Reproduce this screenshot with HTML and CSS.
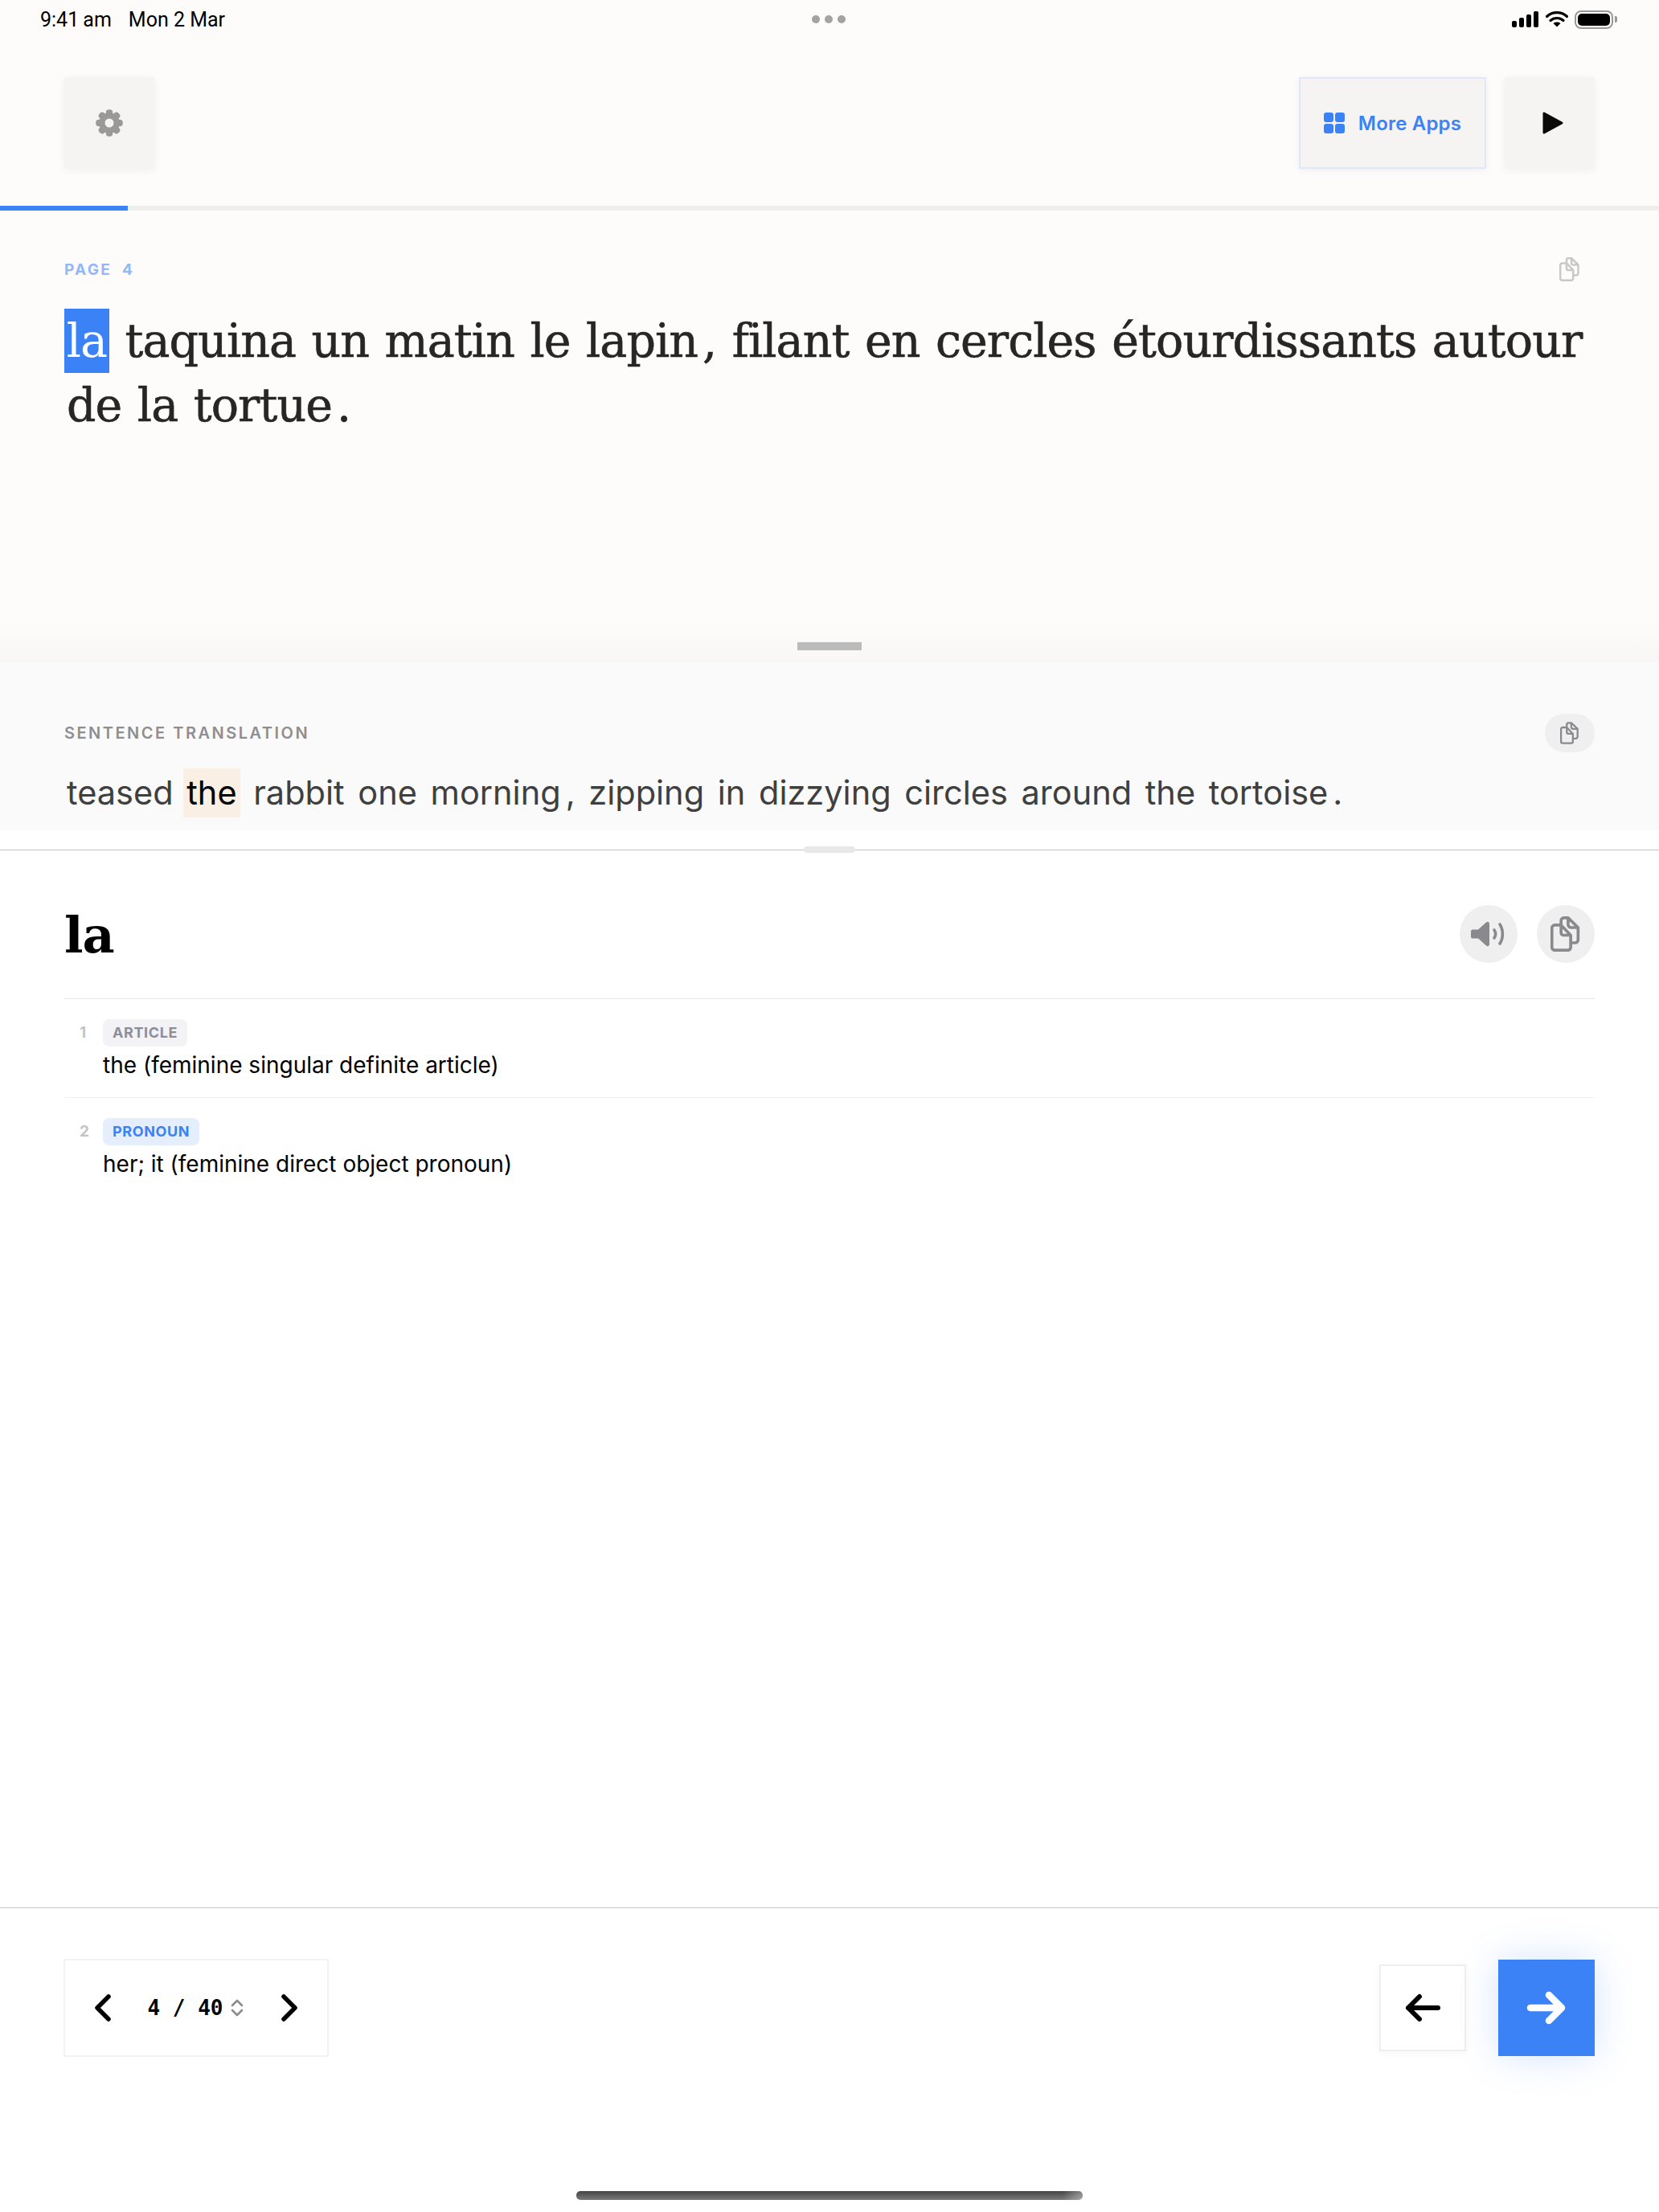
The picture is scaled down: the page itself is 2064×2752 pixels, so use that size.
FILE: index.html
```html
<!DOCTYPE html>
<html lang="en">
<head>
    <meta charset="UTF-8">
    <meta name="viewport" content="width=device-width, initial-scale=1.0">
    <title>Reader</title>
    <link rel="stylesheet" href="styles.css">
</head>
<body>
<div class="page">
    <div class="status">
        <div class="status-left"><span>9:41&#8201;am</span><span>Mon 2 Mar</span></div>
        <div class="status-dots"><i></i><i></i><i></i></div>
        <div class="status-right">
            <svg width="34" height="22" viewBox="0 0 34 22"><rect x="0" y="13" width="6" height="8" rx="2"/><rect x="9" y="9" width="6" height="12" rx="2"/><rect x="18" y="5" width="6" height="16" rx="2"/><rect x="27" y="1" width="6" height="20" rx="2"/></svg>
            <svg width="28" height="22" viewBox="0 0 28 22"><path d="M1.5 7.5C8.5 1 19.5 1 26.500 7.500" fill="none" stroke="#000" stroke-width="3.200" stroke-linecap="round"/><path d="M6 12.500C10.500 8.500 17.500 8.500 22 12.500" fill="none" stroke="#000" stroke-width="3.200" stroke-linecap="round"/><path d="M9.500 16L14 20.500 18.500 16C16 14 12 14 9.500 16Z"/></svg>
            <div class="battery"><div class="battery-fill"></div></div>
            <div class="battery-tip"></div>
        </div>
    </div>

    <div class="toolbar">
        <button class="tool tool-square">
            <svg width="36" height="36" viewBox="0 0 36 36">
                <g fill="#999" stroke="#999" stroke-width="1.500" stroke-linejoin="round">
                    <circle cx="18" cy="18" r="12"/>
                    <rect x="14.500" y="2" width="7" height="32" rx="3"/>
                    <rect x="14.500" y="2" width="7" height="32" rx="3" transform="rotate(45 18 18)"/>
                    <rect x="14.500" y="2" width="7" height="32" rx="3" transform="rotate(90 18 18)"/>
                    <rect x="14.500" y="2" width="7" height="32" rx="3" transform="rotate(135 18 18)"/>
                </g>
                <circle cx="18" cy="18" r="5.500" fill="#f5f4f3"/>
            </svg>
        </button>
        <div class="tool-right">
            <button class="tool tool-apps">
                <span class="apps-icon"><i></i><i></i><i></i><i></i></span>
                More Apps
            </button>
            <button class="tool tool-square">
                <svg class="play" width="28" height="30" viewBox="0 0 28 30"><path fill="#0a0a0a" stroke="#0a0a0a" stroke-width="3" stroke-linejoin="round" d="M3 3v24l22-12z"/></svg>
            </button>
        </div>
    </div>

    <div class="progress"><div class="progress-fill"></div></div>

    <section class="reader">
        <div class="label-row">
            <span class="page-label">PAGE <b>4</b></span>
            <svg class="copy-small" width="26" height="30" viewBox="0 0 26 30"><use href="#copy"/></svg>
        </div>
        <p class="french"><span class="word-on">la</span> taquina un matin le lapin<span class="punct">,</span> filant en cercles étourdissants autour de la tortue<span class="punct">.</span></p>
        <div class="reader-fade"><div class="handle"></div></div>
    </section>

    <section class="sentence">
        <div class="label-row sentence-head">
            <span class="sentence-label">SENTENCE TRANSLATION</span>
            <button class="pill"><svg width="24" height="28" viewBox="0 0 26 30"><use href="#copy"/></svg></button>
        </div>
        <p class="english">teased <span class="word-match">the</span> rabbit one morning<span class="punct">,</span> zipping in dizzying circles around the tortoise<span class="punct">.</span></p>
    </section>

    <div class="split"><div class="split-handle"></div></div>

    <section class="dict">
        <div class="dict-head">
            <h1>la</h1>
            <div class="dict-actions">
                <button class="round">
                    <svg width="44" height="34" viewBox="0 0 44 34"><path fill="#8a8a8e" d="M2 11.500h7L19 2.500c2-1.500 4-.5 4 2v25c0 2.500-2 3.500-4 2l-10-9H2c-1 0-2-1-2-2v-7c0-1 1-2 2-2z"/><path d="M29 12c2 3 2 7 0 10M36 5c4.500 7 4.500 17 0 24" fill="none" stroke="#8a8a8e" stroke-width="3.600" stroke-linecap="round"/></svg>
                </button>
                <button class="round">
                    <svg width="38" height="46" viewBox="0 0 26 30"><use href="#copy"/></svg>
                </button>
            </div>
        </div>
        <div class="sense">
            <span class="num">1</span>
            <div>
                <span class="tag">ARTICLE</span>
                <div class="def">the (feminine singular definite article)</div>
            </div>
        </div>
        <div class="sense">
            <span class="num">2</span>
            <div>
                <span class="tag tag-blue">PRONOUN</span>
                <div class="def">her; it (feminine direct object pronoun)</div>
            </div>
        </div>
    </section>

    <footer class="footer">
        <div class="pager">
            <svg width="24" height="36" viewBox="0 0 24 36"><path d="M18 4L4 18l14 14" class="chev"/></svg>
            <div class="pager-count">
                <span>4 / 40</span>
                <svg width="16" height="22" viewBox="0 0 16 22"><path d="M2 8l6-6 6 6M2 14l6 6 6-6" fill="none" stroke="#8c8c8c" stroke-width="2.600" stroke-linecap="round" stroke-linejoin="round"/></svg>
            </div>
            <svg width="24" height="36" viewBox="0 0 24 36"><path d="M6 4l14 14L6 32" class="chev"/></svg>
        </div>
        <div class="nav">
            <button class="nav-back">
                <svg width="44" height="36" viewBox="0 0 44 36"><path d="M41 18H4M18 4L4 18l14 14" fill="none" stroke="#000" stroke-width="6" stroke-linecap="round" stroke-linejoin="round"/></svg>
            </button>
            <button class="nav-next">
                <svg width="50" height="42" viewBox="0 0 50 42"><path d="M5 21h39M28 5l16 16-16 16" fill="none" stroke="#fff" stroke-width="8.500" stroke-linecap="round" stroke-linejoin="round"/></svg>
            </button>
        </div>
        <div class="home-bar"></div>
    </footer>

    <svg class="defs" width="0" height="0">
        <symbol id="copy" viewBox="0 0 26 30">
            <path fill="none" stroke="currentColor" stroke-width="2.500" stroke-linejoin="round" stroke-linecap="round" d="M3.700 7.400H9L17.200 16v10.300a2.500 2.500 0 0 1-2.500 2.500H3.700a2.500 2.500 0 0 1-2.500-2.500V9.900a2.500 2.500 0 0 1 2.500-2.500zM9 7.400V14a2 2 0 0 0 2 2h6.200M9 7.400V3.700a2.500 2.500 0 0 1 2.500-2.500H15l8.500 8.300v10.500a2.500 2.500 0 0 1-2.500 2.500h-3.800M15 1.200V7a2.500 2.500 0 0 0 2.500 2.500h6"/>
        </symbol>
    </svg>
</div>
</body>
</html>
```

FILE: styles.css
```css
* {
    box-sizing: border-box;
}
body {
    margin: 0;
    background: #fff;
    font-family: Inter, "Liberation Sans", sans-serif;
}
button {
    font-family: inherit;
    border: 0;
    padding: 0;
}
p, h1 {
    margin: 0;
}
.page {
    position: relative;
    width: 2064px;
    height: 2752px;
    display: flex;
    flex-direction: column;
    overflow: hidden;
}
.defs {
    position: absolute;
}

/* status bar */
.status {
    height: 48px;
    background: #fdfcfb;
    padding: 0 52px 0 50px;
    display: grid;
    grid-template-columns: 1fr auto 1fr;
    align-items: center;
}
.status-left {
    display: flex;
    gap: 21px;
    font-size: 25px;
    color: #000;
    font-family: Roboto, sans-serif;
}
.status-dots {
    display: flex;
    gap: 6px;
}
.status-dots i {
    width: 10px;
    height: 10px;
    border-radius: 50%;
    background: #a3a3a3;
}
.status-right {
    display: flex;
    justify-content: flex-end;
    align-items: center;
    gap: 8px;
}
.battery {
    width: 48px;
    height: 23px;
    border: 2px solid #999;
    border-radius: 8px;
    padding: 2px;
}
.battery-fill {
    height: 100%;
    background: #000;
    border-radius: 5px;
}
.battery-tip {
    width: 3px;
    height: 8px;
    background: #999;
    margin-left: -6px;
    border-radius: 0 2px 2px 0;
}

/* top toolbar */
.toolbar {
    height: 208px;
    background: #fdfcfb;
    padding: 48px 80px 0;
    display: flex;
    justify-content: space-between;
    align-items: flex-start;
}
.tool-right {
    display: flex;
    gap: 23px;
}
.tool {
    height: 114px;
    background: #f5f4f3;
    box-shadow: 0 2px 10px rgba(0, 0, 0, 0.05);
    display: flex;
    align-items: center;
    justify-content: center;
}
.tool-square {
    width: 112px;
}
.play {
    margin-left: 7px;
}
.tool-apps {
    width: 233px;
    gap: 17px;
    border: 2px solid #dfe8f8;
    color: #3b82f6;
    font-size: 24px;
    font-weight: 600;
    letter-spacing: 0.200px;
}
.apps-icon {
    display: grid;
    grid-template-columns: 12px 12px;
    gap: 2px;
}
.apps-icon i {
    height: 12px;
    background: #3b82f6;
    border-radius: 3px;
}

.progress {
    height: 6px;
    background: #eeeeec;
}
.progress-fill {
    width: 159px;
    height: 100%;
    background: #3b82f6;
}

/* french text */
.reader {
    height: 562px;
    background: #fdfcfb;
    display: flex;
    flex-direction: column;
}
.label-row {
    display: flex;
    justify-content: space-between;
    align-items: center;
    padding: 0 80px;
}
.reader .label-row {
    padding-top: 54px;
    padding-right: 98px;
    height: 92px;
}
.page-label {
    font-size: 19px;
    font-weight: 700;
    letter-spacing: 2.300px;
    color: #93b8f8;
}
.page-label b {
    font-weight: 700;
    margin-left: 6px;
}
.copy-small {
    color: #c8c8c8;
}
.french {
    margin-top: 30px;
    padding: 0 80px 0 83px;
    font-family: "DejaVu Serif", serif;
    font-size: 57px;
    line-height: 80px;
    letter-spacing: -0.900px;
    word-spacing: 2.200px;
    color: #262626;
    -webkit-text-stroke: 0.600px #262626;
}
.word-on {
    display: inline-block;
    width: 56px;
    margin-left: -3px;
    text-align: center;
    background: #3b82f6;
    color: #fff;
    -webkit-text-stroke: 0;
}
.punct {
    margin-left: 6px;
}
.reader-fade {
    margin-top: auto;
    height: 54px;
    background: linear-gradient(#fdfcfb, #f8f7f5);
    padding-top: 29px;
}
.handle {
    width: 80px;
    height: 10px;
    margin: 0 auto;
    background: #bbb;
}

/* translation */
.sentence {
    height: 209px;
    background: #fafafa;
}
.sentence-head {
    padding-top: 64px;
}
.sentence-label {
    font-size: 20px;
    font-weight: 600;
    letter-spacing: 2.500px;
    color: #8e8e93;
}
.pill {
    width: 62px;
    height: 48px;
    border-radius: 24px;
    background: #efefef;
    color: #8a8a8e;
    display: flex;
    align-items: center;
    justify-content: center;
}
.english {
    margin-top: 20px;
    padding: 0 80px 0 83px;
    font-size: 41.500px;
    line-height: 61px;
    color: #3f3f3f;
    word-spacing: 5px;
}
.word-match {
    display: inline-block;
    background: #f9efe4;
    color: #000;
    padding: 0 4px;
    margin-left: -4px;
}

.split {
    position: relative;
    height: 25px;
    border-bottom: 1px solid #c4c4c4;
}
.split-handle {
    position: absolute;
    left: 1000px;
    top: 20px;
    width: 64px;
    height: 8px;
    border-radius: 4px;
    background: #e8e8e8;
}

/* dictionary */
.dict {
    height: 1315px;
    padding: 0 80px;
}
.dict-head {
    height: 185px;
    padding-top: 68px;
    display: flex;
    justify-content: space-between;
    align-items: flex-start;
    border-bottom: 1px solid #e8e8e8;
}
.dict-head h1 {
    margin-top: 2px;
    font-family: "DejaVu Serif", serif;
    font-size: 62px;
    line-height: 72px;
    letter-spacing: -1px;
    color: #000;
}
.dict-actions {
    display: flex;
    gap: 24px;
}
.round {
    width: 72px;
    height: 72px;
    border-radius: 50%;
    background: #efefef;
    color: #8a8a8e;
    display: flex;
    align-items: center;
    justify-content: center;
}
.sense {
    height: 123px;
    padding: 25px 0 0 19px;
    display: flex;
    gap: 17px;
    border-bottom: 1px solid #f0f0f0;
}
.sense:last-child {
    border-bottom: 0;
}
.num {
    width: 12px;
    font-size: 19px;
    font-weight: 700;
    line-height: 34px;
    color: #c4c4c4;
}
.tag {
    display: inline-block;
    height: 34px;
    line-height: 34px;
    padding: 0 12px;
    border-radius: 8px;
    background: #f3f3f5;
    color: #8e8e9a;
    font-size: 18px;
    font-weight: 700;
    letter-spacing: 0.600px;
}
.tag-blue {
    background: #e5eefd;
    color: #3b82f6;
}
.def {
    margin-top: 3px;
    font-size: 28px;
    line-height: 40px;
    color: #000;
}

/* bottom bar */
.footer {
    position: relative;
    flex: 1;
    border-top: 1px solid #c4c4c4;
    padding: 64px 80px 0;
    display: flex;
    justify-content: space-between;
    align-items: flex-start;
}
.pager {
    width: 330px;
    height: 122px;
    margin-top: -1px;
    margin-left: -1px;
    border: 2px solid #f3f3f3;
    padding: 0 36px;
    display: flex;
    align-items: center;
    justify-content: space-between;
}
.chev {
    fill: none;
    stroke: #000;
    stroke-width: 5.500px;
    stroke-linecap: round;
    stroke-linejoin: round;
}
.pager-count {
    display: flex;
    align-items: center;
    gap: 10px;
    margin-left: -1px;
    font-family: "DejaVu Sans Mono", monospace;
    font-size: 26px;
    font-weight: 700;
    white-space: pre;
}
.nav {
    display: flex;
    align-items: center;
    gap: 40px;
}
.nav-back {
    width: 108px;
    height: 108px;
    border: 2px solid #efefef;
    background: #fff;
    box-shadow: 0 2px 10px rgba(0, 0, 0, 0.04);
    display: flex;
    align-items: center;
    justify-content: center;
}
.nav-next {
    width: 120px;
    height: 120px;
    background: #3b82f6;
    box-shadow: 0 0 48px rgba(59, 130, 246, 0.22);
    display: flex;
    align-items: center;
    justify-content: center;
}
.home-bar {
    position: absolute;
    left: 717px;
    bottom: 15px;
    width: 630px;
    height: 11px;
    border-radius: 5px;
    background: linear-gradient(90deg, transparent 96%, rgba(255, 255, 255, 0.35)), linear-gradient(#444, #7a7a7a);
}
```
